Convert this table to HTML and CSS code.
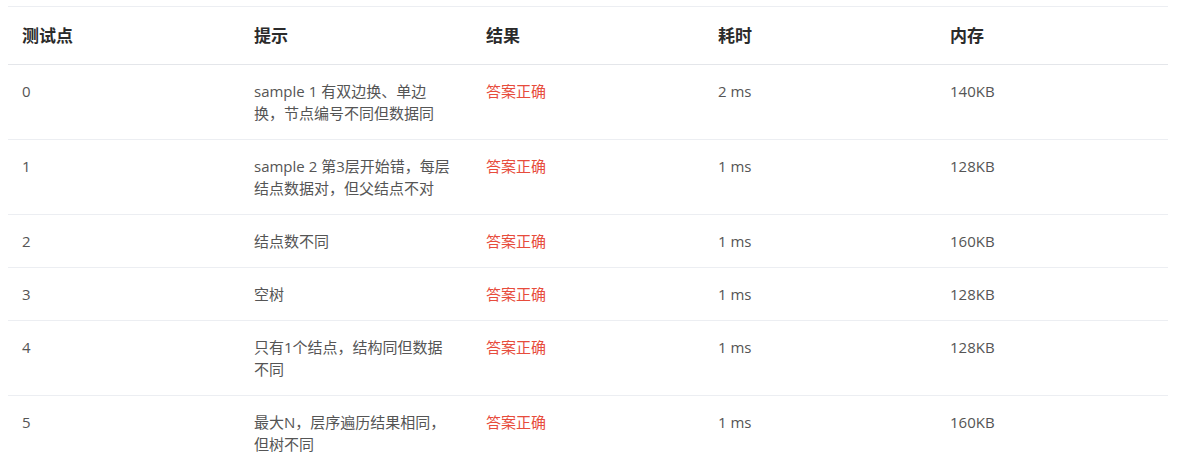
FILE: index.html
```html
<!DOCTYPE html>
<html lang="zh-CN">
<head>
<meta charset="utf-8">
<title>测试点</title>
<link rel="stylesheet" href="styles.css">
</head>
<body>
<div class="wrap">
<table class="cases">
  <thead>
    <tr><th>测试点</th><th>提示</th><th>结果</th><th>耗时</th><th>内存</th></tr>
  </thead>
  <tbody>
    <tr><td>0</td><td>sample 1 有双边换、单边<br>换，节点编号不同但数据同</td><td class="ok">答案正确</td><td>2 ms</td><td>140KB</td></tr>
    <tr><td>1</td><td>sample 2 第3层开始错，每层<br>结点数据对，但父结点不对</td><td class="ok">答案正确</td><td>1 ms</td><td>128KB</td></tr>
    <tr><td>2</td><td>结点数不同</td><td class="ok">答案正确</td><td>1 ms</td><td>160KB</td></tr>
    <tr><td>3</td><td>空树</td><td class="ok">答案正确</td><td>1 ms</td><td>128KB</td></tr>
    <tr><td>4</td><td>只有1个结点，结构同但数据<br>不同</td><td class="ok">答案正确</td><td>1 ms</td><td>128KB</td></tr>
    <tr><td>5</td><td>最大N，层序遍历结果相同，<br>但树不同</td><td class="ok">答案正确</td><td>1 ms</td><td>160KB</td></tr>
  </tbody>
</table>
</div>
</body>
</html>
```
FILE: styles.css
```css
html, body {
  margin: 0;
  padding: 0;
  background: #fff;
}
body {
  font-family: "Open Sans", "Noto Sans CJK SC", sans-serif;
  color: #555;
}
.wrap {
  padding: 6px 10px 0 8px;
}
.cases {
  width: 1160px;
  border-collapse: collapse;
  table-layout: fixed;
  border-top: 1px solid #eceef2;
}
.cases th,
.cases td {
  text-align: left;
  vertical-align: top;
  padding: 15px 14px;
  border-bottom: 1px solid #eceef2;
}
.cases th {
  font-size: 17px;
  font-weight: 700;
  color: #2b2b2b;
  line-height: 24px;
  padding: 17px 14px 16px;
  border-bottom: 1px solid #e4e6ea;
}
.cases td {
  font-size: 15px;
  line-height: 22px;
}
.cases td.ok {
  color: #e74c3c;
}
```
